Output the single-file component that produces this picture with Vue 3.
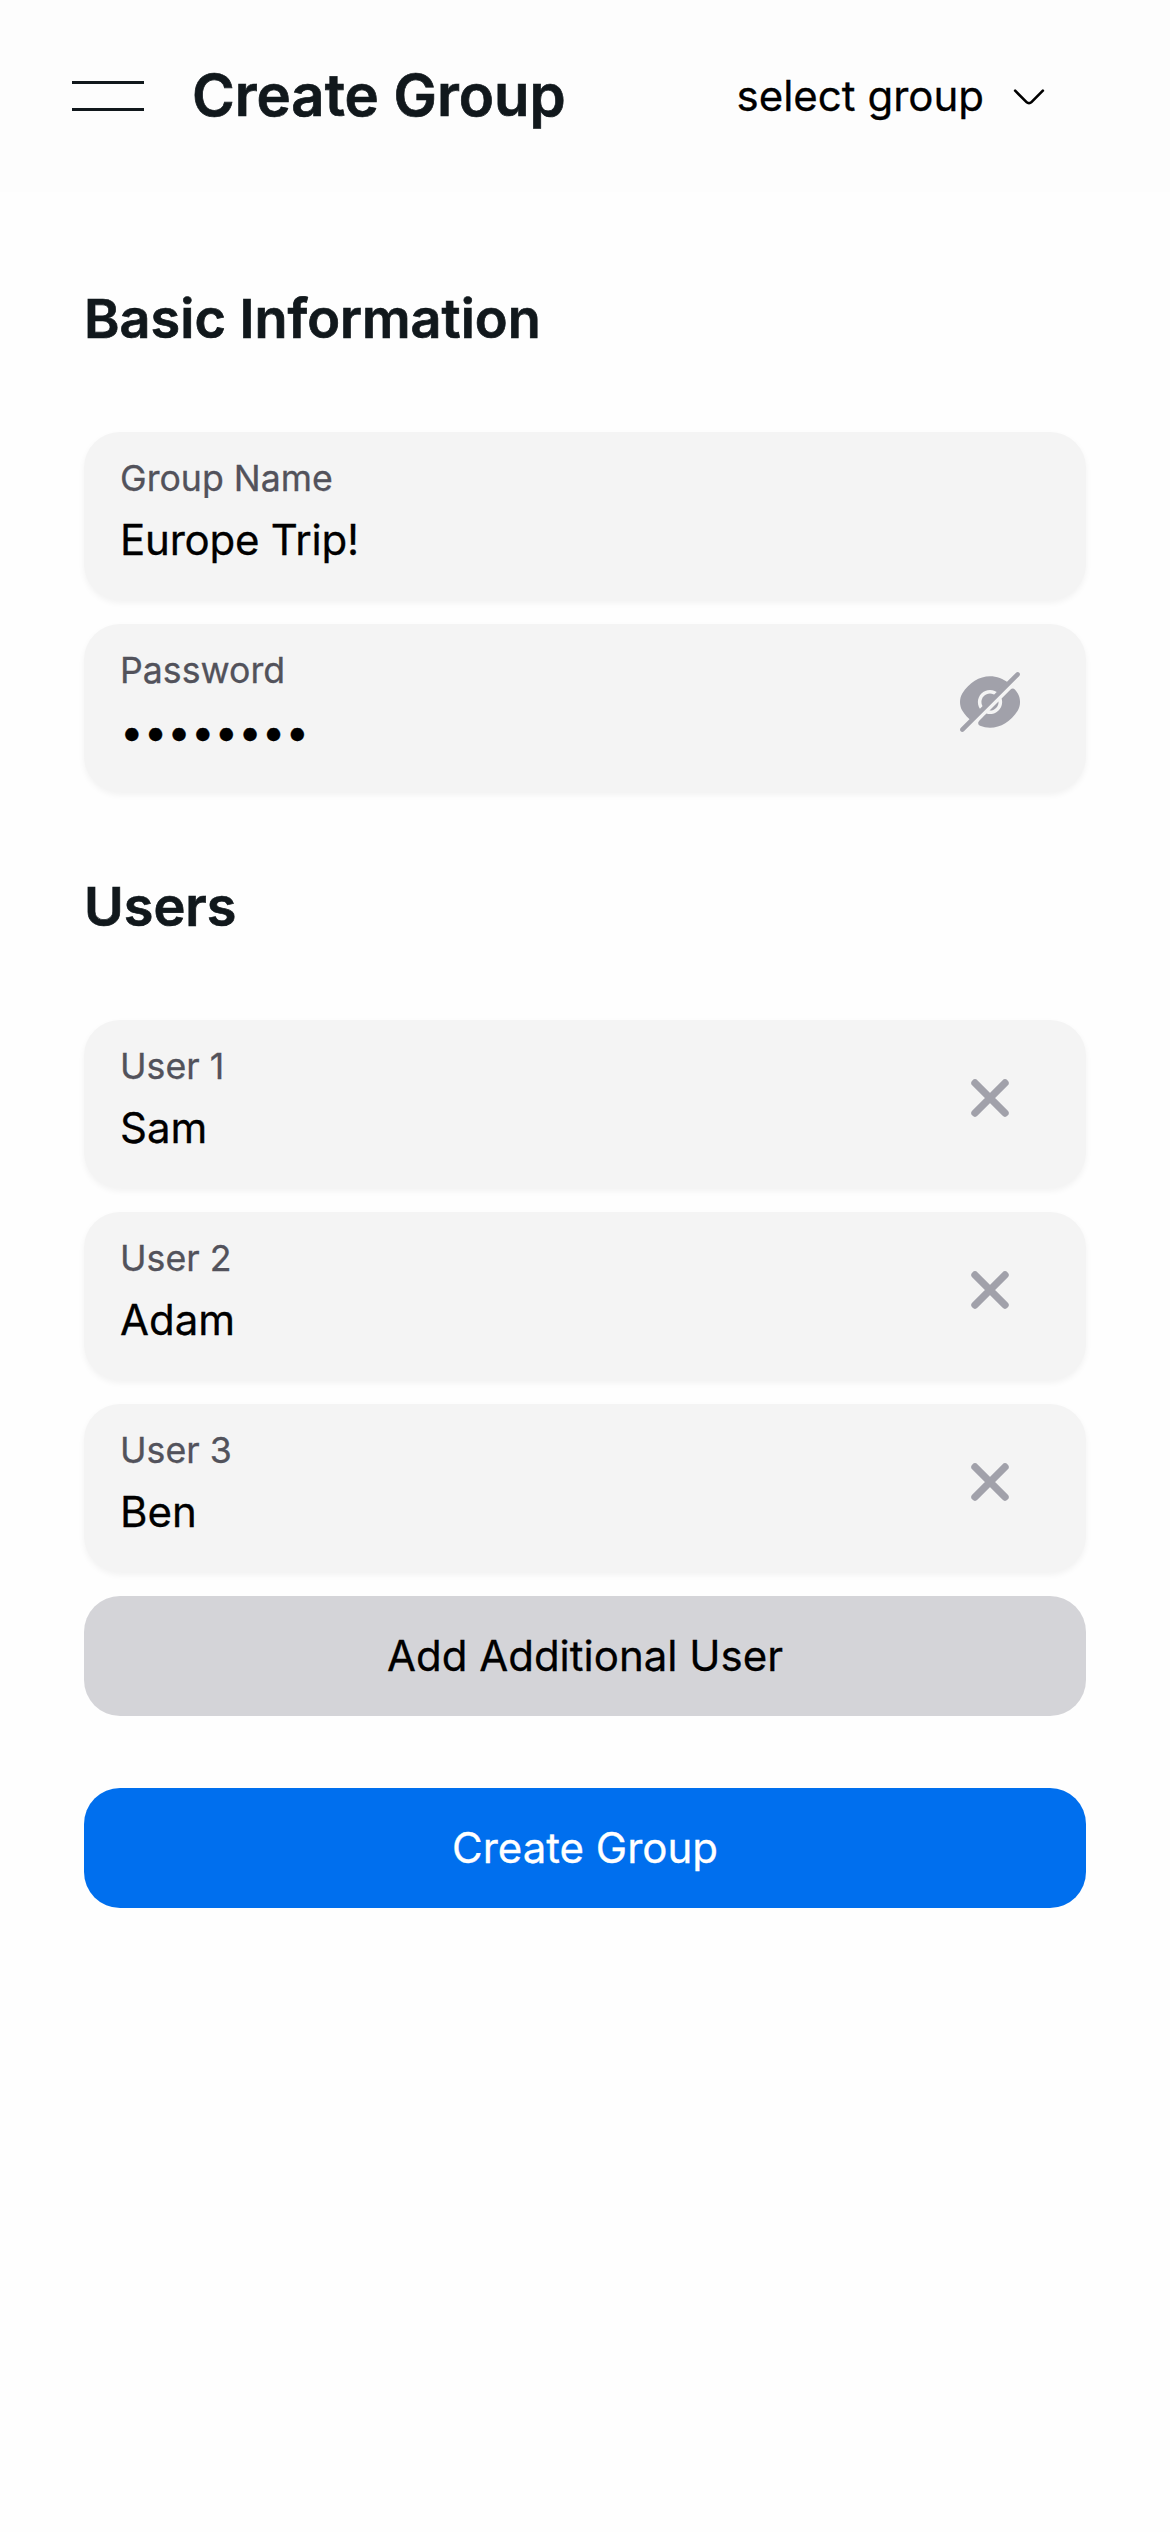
<script setup>
import { ref } from 'vue'

const groupName = ref('Europe Trip!')
const users = ref(['Sam', 'Adam', 'Ben'])
</script>

<template>
  <div class="page">
    <header class="navbar">
      <button class="menu" aria-label="Open menu"><span></span><span></span></button>
      <h1 class="title">Create Group</h1>
      <button class="select">
        <span class="select-text">select group</span>
        <svg class="chevron" viewBox="0 0 24 24" fill="none" stroke="currentColor" stroke-width="1.5" stroke-linecap="round" stroke-linejoin="round">
          <path d="m19.92 8.95-6.52 6.52c-.77.77-2.03.77-2.8 0L4.08 8.95" />
        </svg>
      </button>
    </header>

    <main class="content">
      <h2 class="section-title">Basic Information</h2>
      <div class="fields">
        <div class="field">
          <div class="field-text">
            <span class="label">Group Name</span>
            <span class="value name">{{ groupName }}</span>
          </div>
        </div>
        <div class="field">
          <div class="field-text">
            <span class="label">Password</span>
            <span class="value">••••••••</span>
          </div>
          <svg class="icon" viewBox="0 0 24 24" fill="currentColor">
            <path d="M21.2714 9.17834C20.9814 8.71834 20.6714 8.28834 20.3514 7.88834C19.9814 7.41834 19.2814 7.37834 18.8614 7.79834L15.8614 10.7983C16.0814 11.4583 16.1214 12.2183 15.9214 13.0083C15.5714 14.4183 14.4314 15.5583 13.0214 15.9083C12.2314 16.1083 11.4714 16.0683 10.8114 15.8483C10.8114 15.8483 9.38141 17.2783 8.35141 18.3083C7.85141 18.8083 8.01141 19.6883 8.68141 19.9483C9.75141 20.3583 10.8614 20.5683 12.0014 20.5683C13.7814 20.5683 15.5114 20.0483 17.0914 19.0783C18.7014 18.0783 20.1514 16.6083 21.3214 14.7383C22.2714 13.2283 22.2214 10.6883 21.2714 9.17834Z" />
            <path d="M14.0206 9.98062L9.98062 14.0206C9.47062 13.5006 9.14062 12.7806 9.14062 12.0006C9.14062 10.4306 10.4206 9.14062 12.0006 9.14062C12.7806 9.14062 13.5006 9.47062 14.0206 9.98062Z" />
            <path d="M18.25 5.74969L14.86 9.13969C14.13 8.39969 13.12 7.95969 12 7.95969C9.76 7.95969 7.96 9.76969 7.96 11.9997C7.96 13.1197 8.41 14.1297 9.14 14.8597L5.76 18.2497H5.75C4.64 17.3497 3.62 16.1997 2.75 14.8397C1.75 13.2697 1.75 10.7197 2.75 9.14969C3.91 7.32969 5.33 5.89969 6.91 4.91969C8.49 3.95969 10.22 3.42969 12 3.42969C14.23 3.42969 16.39 4.24969 18.25 5.74969Z" />
            <path d="M14.8581 11.9981C14.8581 13.5681 13.5781 14.8581 11.9981 14.8581C11.9381 14.8581 11.8881 14.8581 11.8281 14.8381L14.8381 11.8281C14.8581 11.8881 14.8581 11.9381 14.8581 11.9981Z" />
            <path d="M21.7689 2.22891C21.4689 1.92891 20.9789 1.92891 20.6789 2.22891L2.22891 20.6889C1.92891 20.9889 1.92891 21.4789 2.22891 21.7789C2.37891 21.9189 2.56891 21.9989 2.76891 21.9989C2.96891 21.9989 3.15891 21.9189 3.30891 21.7689L21.7689 3.30891C22.0789 3.00891 22.0789 2.52891 21.7689 2.22891Z" />
          </svg>
        </div>
      </div>

      <h2 class="section-title">Users</h2>
      <div class="fields">
        <div v-for="(user, i) in users" :key="i" class="field">
          <div class="field-text">
            <span class="label">User {{ i + 1 }}</span>
            <span class="value">{{ user }}</span>
          </div>
          <svg class="icon" viewBox="0 0 72 72" fill="none" stroke="currentColor" stroke-width="7.4" stroke-linecap="round">
            <path d="M21 21 51 51M51 21 21 51" />
          </svg>
        </div>
        <button class="btn btn-default">Add Additional User</button>
      </div>
      <button class="btn btn-primary">Create Group</button>
    </main>
  </div>
</template>

<style>
body {
  margin: 0;
  background: #fefefe;
}
</style>

<style scoped>
.page {
  min-height: 2532px;
  background: #fefefe;
  font-family: Inter, "Liberation Sans", sans-serif;
  color: #000;
  -webkit-text-stroke: 0.3px currentColor;
}
button {
  margin: 0;
  padding: 0;
  border: 0;
  background: none;
  font: inherit;
  color: inherit;
}
.navbar {
  display: flex;
  align-items: center;
  height: 192px;
  padding: 0 120px 0 72px;
  box-sizing: border-box;
  background: #fdfdfd;
}
.menu {
  display: flex;
  flex-direction: column;
  gap: 24px;
  width: 72px;
}
.menu span {
  height: 3px;
  background: #11181c;
}
.title {
  margin: 0 0 2px 48px;
  font-size: 58px;
  line-height: 84px;
  font-weight: 600;
  color: #11181c;
  white-space: nowrap;
  -webkit-text-stroke: 0.7px #11181c;
}
.select {
  display: flex;
  align-items: center;
  gap: 24px;
  margin-left: auto;
  font-size: 42px;
  line-height: 60px;
  white-space: nowrap;
}
.chevron {
  width: 42px;
  height: 42px;
}
.content {
  display: flex;
  flex-direction: column;
  padding: 84px 84px 0;
}
.section-title {
  margin: 0;
  height: 156px;
  font-size: 54px;
  line-height: 86px;
  font-weight: 600;
  color: #11181c;
  -webkit-text-stroke: 0.7px #11181c;
}
.fields {
  display: flex;
  flex-direction: column;
  gap: 24px;
  margin-bottom: 72px;
}
.field {
  display: flex;
  justify-content: space-between;
  height: 168px;
  padding: 24px 60px 0 36px;
  box-sizing: border-box;
  border-radius: 36px;
  background: #f4f4f4;
  box-shadow: 0 3px 6px rgba(0, 0, 0, 0.05);
}
.field-text {
  display: flex;
  flex-direction: column;
}
.label {
  font-size: 35.7px;
  line-height: 44px;
  color: #52525b;
}
.value {
  margin-top: 10px;
  font-size: 42px;
  line-height: 60px;
}
.name {
  letter-spacing: -0.22px;
}
.icon {
  width: 72px;
  height: 72px;
  margin-top: 18px;
  color: #a1a1aa;
}
.btn {
  height: 120px;
  border-radius: 36px;
  font-size: 42px;
  line-height: 60px;
}
.btn-default {
  background: #d4d4d8;
}
.btn-primary {
  background: #006fee;
  color: #fff;
}
</style>
